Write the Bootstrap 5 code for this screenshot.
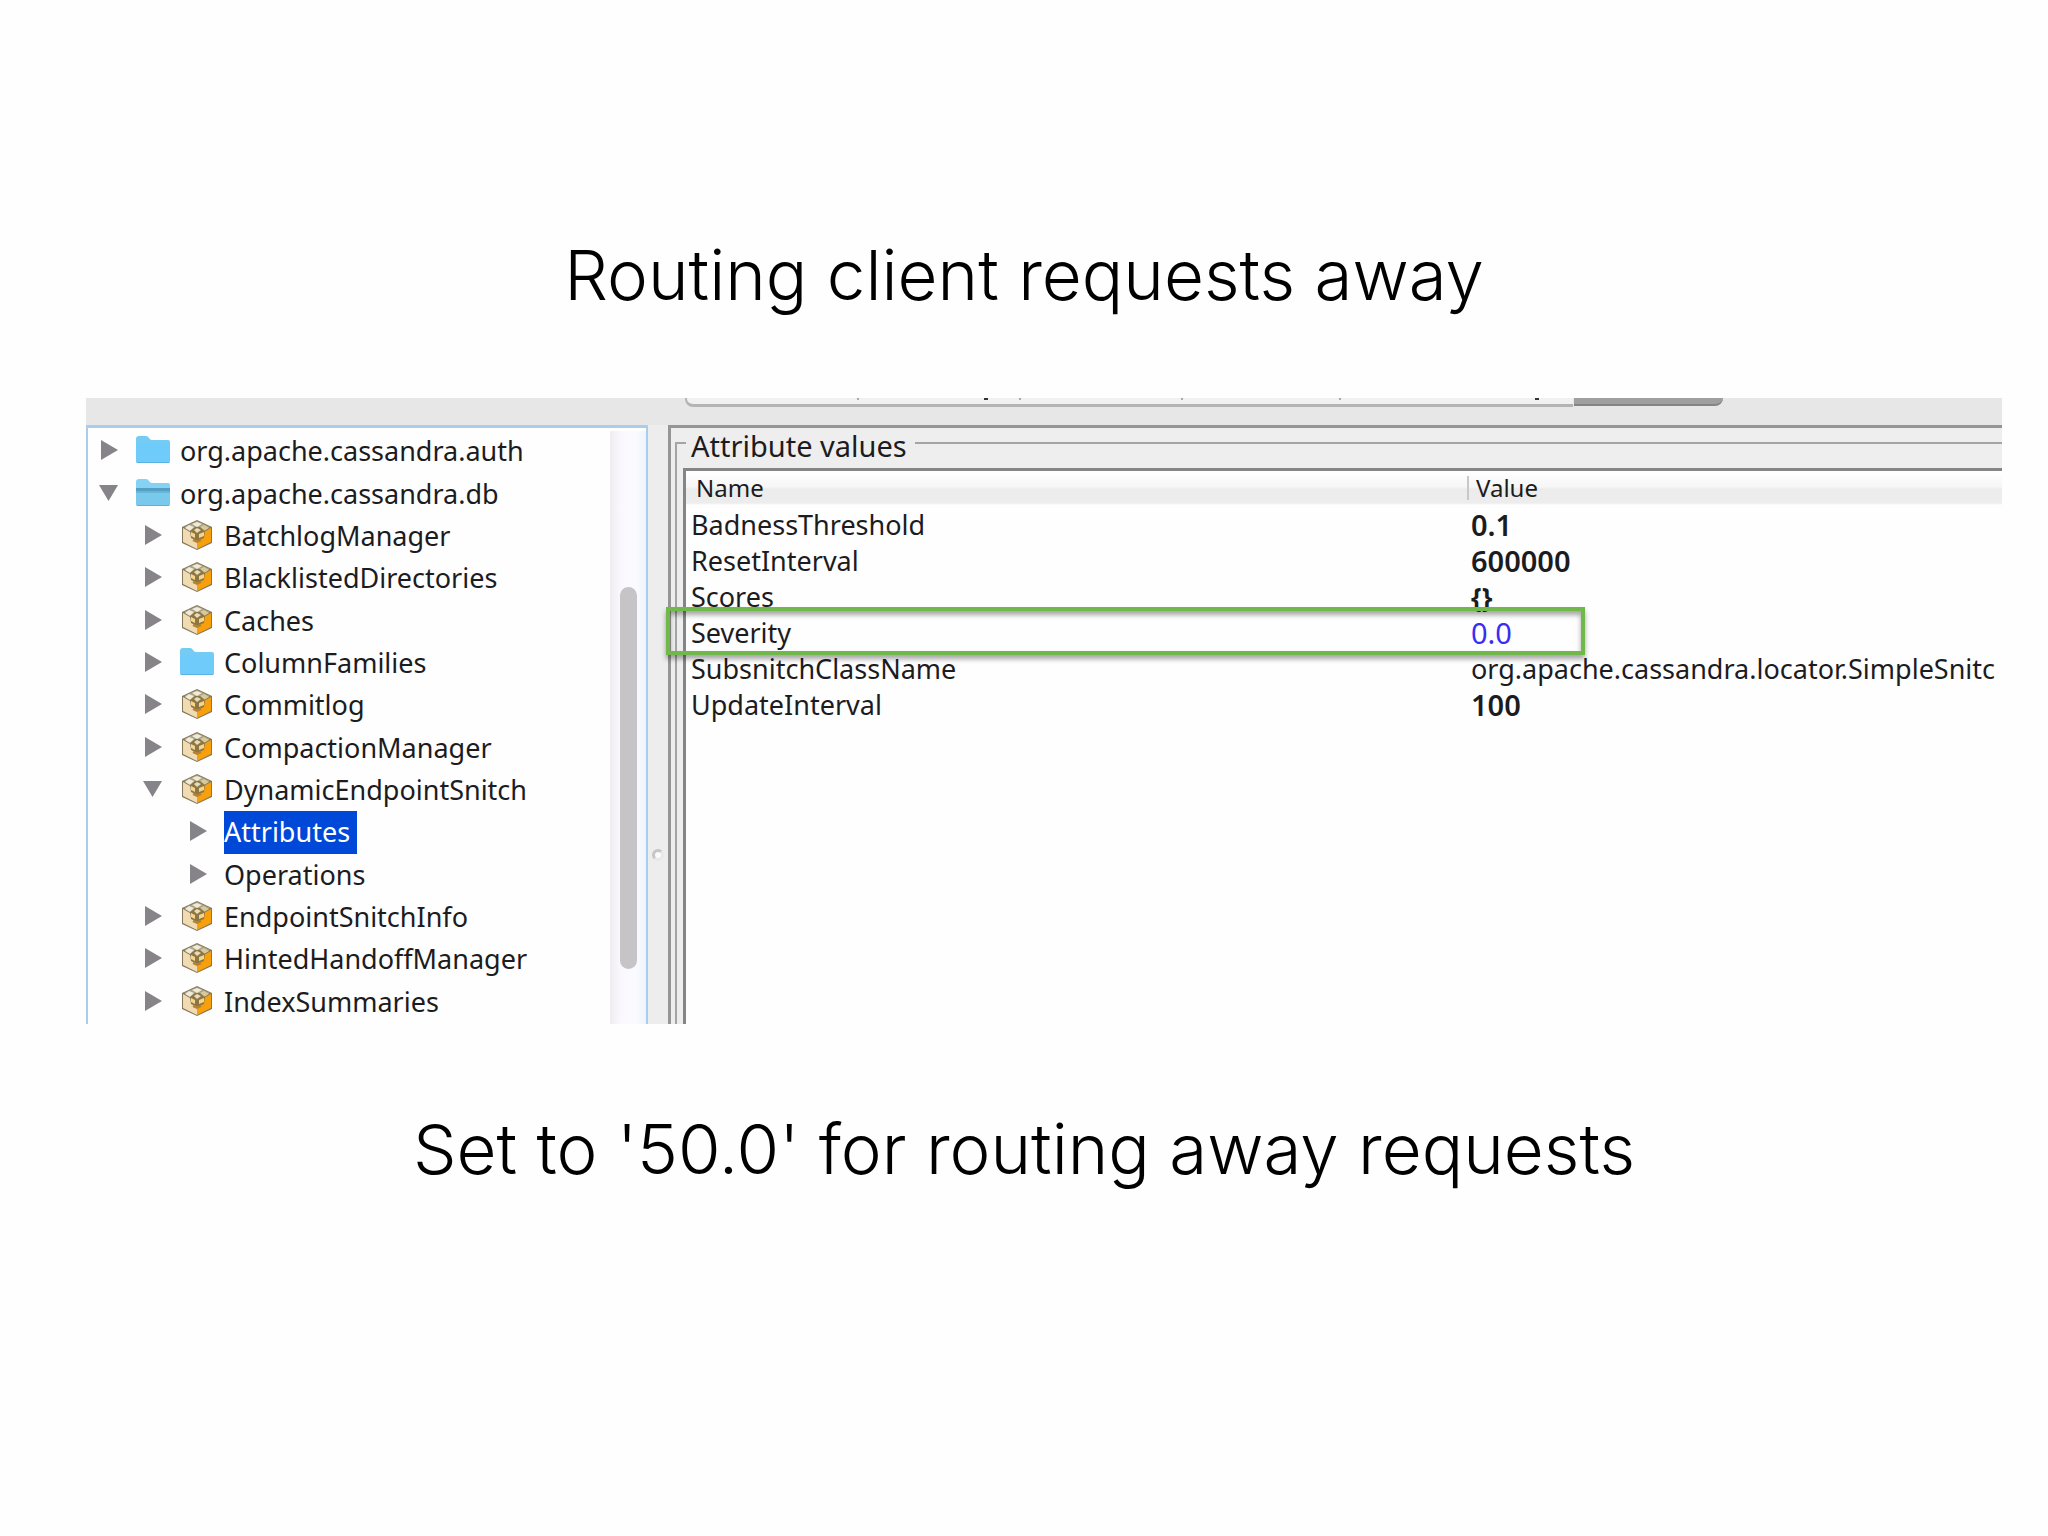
<!DOCTYPE html>
<html lang="en">
<head>
<meta charset="utf-8">
<meta name="viewport" content="width=device-width, initial-scale=1">
<title>Routing client requests away</title>
<link href="https://cdn.jsdelivr.net/npm/bootstrap@5.3.0/dist/css/bootstrap.min.css" rel="stylesheet">
<style>
  body { background: #fefefe; color: #000; }
  .slide { padding: 227px 46px 0 86px; }
  .slide-title { font: 300 69px/96px "Inter", "Roboto", sans-serif; margin: 0 40px 0 0; }
  .console { margin: 75px 0 77px; background: #e7e7e7; color: #1c1c1e; font: 27px/36px "Noto Sans", sans-serif; }
  .tabstrip { height: 27px; padding-left: 599px; }
  .tabs-plain { width: 888px; height: 9px; background: #f1f1f1; border: solid #b4b4b4; border-width: 0 0 3px 2px; border-radius: 0 0 0 8px; padding-left: 170px; grid-template-columns: 127px 35px 162px 158px 196px 4px; }
  .tick { width: 2px; height: 2px; background: #aaa; }
  .tick-dark { width: 4px; background: #333; }
  .tab-active { width: 149px; height: 8px; margin-left: 1px; background: #9f9f9f; border-bottom: 2px solid #848484; border-radius: 0 0 8px 0; }
  .tree-pane { width: 562px; border: solid #a9cdec; border-width: 3px 2px 0; background: #fefefe; }
  .tree { min-height: 596px; padding: 2px 0 1px; grid-auto-rows: 1fr; }
  .tree li { padding-left: 9px; }
  .tree .lvl-1 { padding-left: 53px; }
  .tree .lvl-2 { padding-left: 98px; }
  .twist { width: 22px; height: 22px; margin-right: 16px; }
  .twist svg, .ico { display: block; }
  .ico { width: 36px; height: 34px; margin-right: 9px; }
  .node { align-self: stretch; padding-right: 7px; }
  .node.selected { background: #0048d8; color: #fff; }
  .track { width: 36px; background: linear-gradient(90deg, #efedf1, #faf8fc 30%, #fbfbff 70%, #eef5fc); margin-top: 3px; padding: 156px 9px 0 10px; }
  .thumb { height: 382px; border-radius: 9px; background: #c7c4c8; }
  .divider { width: 20px; background: #ededee; }
  .grip { width: 12px; height: 12px; border-radius: 50%; background: #fafafa; border: 3px solid #c6c6c6; border-right-color: #e8e8e8; border-bottom-color: #e8e8e8; margin-bottom: 163px; }
  .attr-pane { border: solid #959595; border-width: 3px 0 0 3px; background: #eee; }
  .attr-set { border: solid #a4a4a4; border-width: 2px 0 0 2px; margin-left: 4px; padding: 10px 0 0 6px; }
  .attr-set legend { float: none; width: auto; margin: 0 0 0 3px; padding: 6px 8px 0 5px; font-size: 29px; line-height: 24px; }
  .grid-box { border: solid #858585; border-width: 3px 0 0 3px; background: #fefefe; }
  .attr-table { table-layout: fixed; border-collapse: separate; border-spacing: 0; }
  .attr-table th, .attr-table td { height: 36px; padding: 0 0 0 5px; white-space: nowrap; }
  .attr-table th { font-size: 24px; font-weight: 400; line-height: 33px; padding: 0 0 3px 10px; background: linear-gradient(#fff, #f6f6f6 16px, #ececec 18px, #ededed 32px, #fefefe 34px); }
  .attr-table col.name { width: 780px; }
  .attr-table .bar { border-left: 2px solid #c8c8c8; line-height: 24px; padding-left: 7px; display: inline-block; }
  .attr-table th.value { padding-left: 1px; }
  .attr-table .num { font-weight: 700; }
  .attr-table .digits { font-size: 29px; font-weight: 600; }
  .attr-table .editable { color: #3a2cf0; font-size: 29px; }
  .callout { left: -5px; top: 179px; width: 919px; height: 48px; border: 4px solid #70b84a; box-shadow: 0 4px 5px rgba(0,0,0,.35), inset 0 4px 5px rgba(0,0,0,.35); }
</style>
</head>
<body>
<svg class="d-none" aria-hidden="true">
  <defs>
    <symbol id="right" viewBox="0 0 22 22"><path d="M4 0v20l17-10z" fill="#868488"/></symbol>
    <symbol id="down" viewBox="0 0 22 22"><path d="M2 2h19L11.500 18z" fill="#868488"/></symbol>
    <symbol id="folder" viewBox="0 0 36 34">
      <path d="M1 5q0-3 3-3h7q2 0 3 2t3 2h16q2 0 2 2v19q0 2-2 2H3q-2 0-2-2z" fill="#74cbf3"/>
      <path d="M1 9h34v18q0 2-2 2H3q-2 0-2-2z" fill="#6ecbfa"/>
      <path d="M2 28.500h32" stroke="#5ab2e2" stroke-width="1"/>
    </symbol>
    <symbol id="folder-open" viewBox="0 0 36 34">
      <path d="M1 5q0-3 3-3h7q2 0 3 2t3 2h16q2 0 2 2v19q0 2-2 2H3q-2 0-2-2z" fill="#86d2f4"/>
      <path d="M1 11h34v16q0 2-2 2H3q-2 0-2-2z" fill="#78c9ec"/>
      <path d="M1 11h34v3H1z" fill="#559fc2"/>
      <path d="M1 14h34v2H1z" fill="#67b5d8"/>
      <path d="M2 28.500h32" stroke="#5ab2e2" stroke-width="1"/>
    </symbol>
    <symbol id="bean" viewBox="0 0 36 34">
      <path d="M18 1l15 7v16L18 31 3 24V8z" fill="#85775a"/>
      <path d="M18 2l13 6-13 8L5 8z" fill="#aaa384"/>
      <path d="M4 9l14 8v13L4 23z" fill="#f0dbb2"/>
      <path d="M32 9l-14 8v13l14-7z" fill="#f8a00c"/>
      <path d="M18 3l5 2-5 3-5-3zM10 6l5 2-4 4-5-3z" fill="#efeada"/>
      <path d="M25 6l5 3-5 3-4-4z" fill="#d8c99a"/>
      <path d="M11 12l5-4h5l5 4-1 7-7 3-6-3z" fill="#8d7644"/>
      <path d="M12 13l4 2v4l-4-2zM25 13l-5 2v4l5-2z" fill="#f3d68c"/>
      <path d="M18 9l4 2-4 3-3-3z" fill="#e6dcbc"/>
      <path d="M14 21l4 2 4-2" stroke="#b5812a" stroke-width="2" fill="none"/>
    </symbol>
  </defs>
</svg>

<main class="slide">
  <h1 class="slide-title text-center">Routing client requests away</h1>

  <section class="console overflow-hidden" aria-label="MBean browser">
    <div class="tabstrip d-flex align-items-start">
      <div class="tabs-plain d-grid">
        <span class="tick"></span><span class="tick tick-dark"></span><span class="tick"></span><span class="tick"></span><span class="tick"></span><span class="tick tick-dark"></span>
      </div>
      <div class="tab-active"></div>
    </div>

    <div class="d-flex">
      <nav class="tree-pane d-flex flex-shrink-0" aria-label="MBeans">
        <ul class="tree list-unstyled d-grid flex-grow-1 mb-0" id="tree"></ul>
        <div class="track"><div class="thumb"></div></div>
      </nav>
      <div class="divider d-flex flex-shrink-0 align-items-end justify-content-center"><span class="grip"></span></div>

      <div class="attr-pane position-relative d-flex flex-grow-1">
        <fieldset class="attr-set d-flex flex-column flex-grow-1">
          <legend>Attribute values</legend>
          <div class="grid-box flex-grow-1">
            <table class="attr-table w-100">
              <colgroup><col class="name"><col></colgroup>
              <thead><tr><th scope="col">Name</th><th scope="col" class="value"><span class="bar">Value</span></th></tr></thead>
              <tbody>
                <tr><td>BadnessThreshold</td><td class="num digits">0.1</td></tr>
                <tr><td>ResetInterval</td><td class="num digits">600000</td></tr>
                <tr><td>Scores</td><td class="num">{}</td></tr>
                <tr><td>Severity</td><td class="editable">0.0</td></tr>
                <tr><td>SubsnitchClassName</td><td>org.apache.cassandra.locator.SimpleSnitc</td></tr>
                <tr><td>UpdateInterval</td><td class="num digits">100</td></tr>
              </tbody>
            </table>
          </div>
        </fieldset>
        <div class="callout position-absolute"></div>
      </div>
    </div>
  </section>

  <p class="slide-title text-center">Set to '50.0' for routing away requests</p>
</main>

<script>
  // [label, level, icon, expanded, selected]
  const nodes = [
    ["org.apache.cassandra.auth", 0, "folder"],
    ["org.apache.cassandra.db", 0, "folder-open", true],
    ["BatchlogManager", 1, "bean"],
    ["BlacklistedDirectories", 1, "bean"],
    ["Caches", 1, "bean"],
    ["ColumnFamilies", 1, "folder"],
    ["Commitlog", 1, "bean"],
    ["CompactionManager", 1, "bean"],
    ["DynamicEndpointSnitch", 1, "bean", true],
    ["Attributes", 2, null, false, true],
    ["Operations", 2, null],
    ["EndpointSnitchInfo", 1, "bean"],
    ["HintedHandoffManager", 1, "bean"],
    ["IndexSummaries", 1, "bean"]
  ];
  document.getElementById("tree").innerHTML = nodes.map(([label, level, icon, open, selected]) =>
    `<li class="lvl-${level} d-flex align-items-center">
      <button type="button" class="twist border-0 bg-transparent p-0" aria-label="Toggle ${label}" aria-expanded="${!!open}"><svg width="22" height="22"><use href="#${open ? "down" : "right"}"/></svg></button>
      ${icon ? `<svg class="ico"><use href="#${icon}"/></svg>` : ""}
      <span class="node d-flex align-items-center${selected ? " selected" : ""}">${label}</span>
    </li>`).join("");
</script>
<script src="https://cdn.jsdelivr.net/npm/bootstrap@5.3.0/dist/js/bootstrap.bundle.min.js"></script>
</body>
</html>
